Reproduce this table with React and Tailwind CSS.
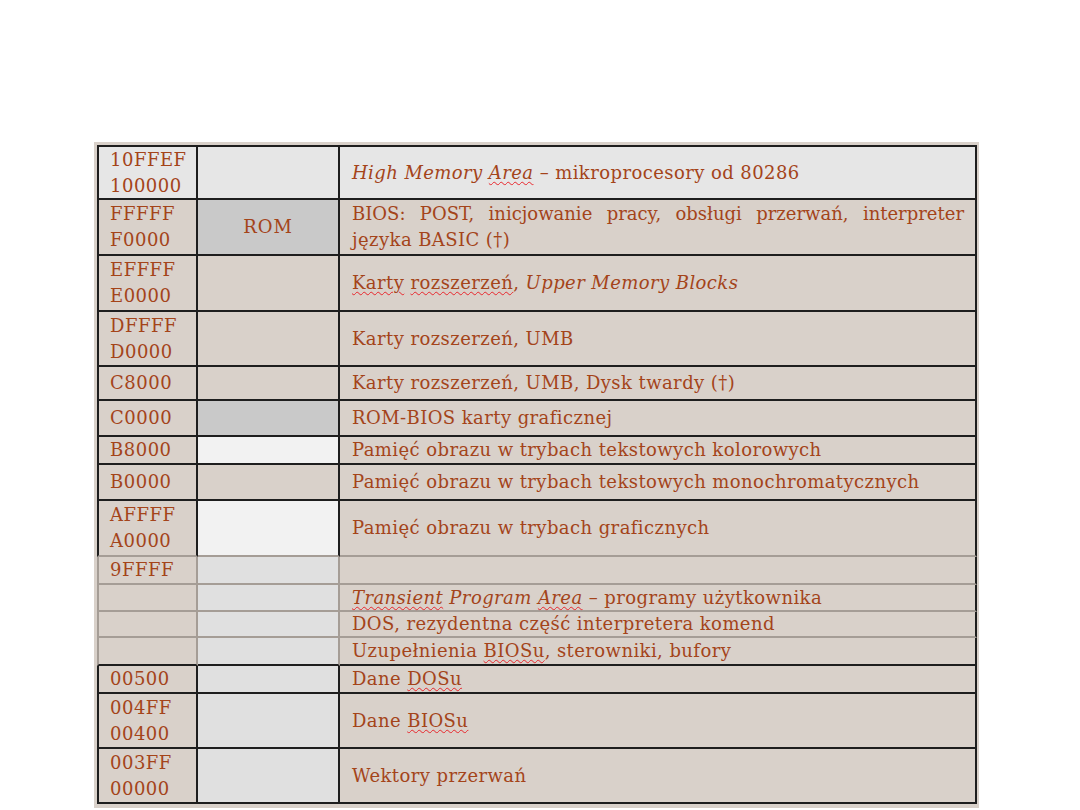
const W = ({ children }) => (
  <span className="underline decoration-wavy decoration-[#e8262c] decoration-1 underline-offset-[2px]">{children}</span>
);

const rows = [
  { h: 'h-[55px]', c1: ['10FFEF', '100000'], bg1: 'bg-[#e6e6e6]', bg2: 'bg-[#e6e6e6]', bg3: 'bg-[#e6e6e6]',
    c3: (<><i>High Memory <W>Area</W></i> – mikroprocesory od 80286</>) },
  { h: 'h-[56px]', c1: ['FFFFF', 'F0000'], bg2: 'bg-[#c9c9c9]', c2: 'ROM', bios: true },
  { h: 'h-[56px]', c1: ['EFFFF', 'E0000'],
    c3: (<><W>Karty</W> <W>rozszerzeń</W>, <i>Upper Memory Blocks</i></>) },
  { h: 'h-[55px]', c1: ['DFFFF', 'D0000'], c3: 'Karty rozszerzeń, UMB' },
  { h: 'h-[34px]', c1: ['C8000'], c3: 'Karty rozszerzeń, UMB, Dysk twardy (†)' },
  { h: 'h-[36px]', c1: ['C0000'], bg2: 'bg-[#c9c9c9]', c3: 'ROM-BIOS karty graficznej' },
  { h: 'h-[28px]', c1: ['B8000'], bg2: 'bg-[#f2f2f2]', c3: 'Pamięć obrazu w trybach tekstowych kolorowych' },
  { h: 'h-[36px]', c1: ['B0000'], c3: 'Pamięć obrazu w trybach tekstowych monochromatycznych' },
  { h: 'h-[56px]', c1: ['AFFFF', 'A0000'], bg2: 'bg-[#f2f2f2]', c3: 'Pamięć obrazu w trybach graficznych', grayBottom: true },
  { h: 'h-[28px]', c1: ['9FFFF'], bg2: 'bg-[#e0e0e0]', c3: '', gray: true, grayBottom: true },
  { h: 'h-[27px]', c1: [], bg2: 'bg-[#e0e0e0]', gray: true, grayBottom: true,
    c3: (<><i><W>Transient</W> Program <W>Area</W></i> – programy użytkownika</>) },
  { h: 'h-[26px]', c1: [], bg2: 'bg-[#e0e0e0]', gray: true, grayBottom: true,
    c3: 'DOS, rezydentna część interpretera komend' },
  { h: 'h-[28px]', c1: [], bg2: 'bg-[#e0e0e0]', gray: true,
    c3: (<>Uzupełnienia <W>BIOSu</W>, sterowniki, bufory</>) },
  { h: 'h-[28px]', c1: ['00500'], bg2: 'bg-[#e0e0e0]', c3: (<>Dane <W>DOSu</W></>) },
  { h: 'h-[55px]', c1: ['004FF', '00400'], bg2: 'bg-[#e0e0e0]', c3: (<>Dane <W>BIOSu</W></>) },
  { h: 'h-[55px]', c1: ['003FF', '00000'], bg2: 'bg-[#e0e0e0]', c3: 'Wektory przerwań' },
];

export default function App() {
  return (
    <div className="w-[1080px] h-[810px] bg-white overflow-hidden">
      <div className="ml-[94px] mt-[142px] w-[885px] h-[666px] bg-[#d9d1ca] pl-[3px] pt-[3px]"
        style={{ fontFamily: '"DejaVu Serif", serif' }}>
        <div className="w-[880px] text-[#a4441a] text-[18px] leading-[26px]">
          {rows.map((r, i) => {
            const bb = r.grayBottom ? 'border-b-[#a59d96]' : 'border-b-[#1e1e1e]';
            const vr = r.gray ? 'border-r-[#a59d96]' : 'border-r-[#1e1e1e]';
            const vl = r.gray ? 'border-l-[#a59d96]' : 'border-l-[#1e1e1e]';
            const top = i === 0 ? 'border-t-2 border-t-[#1e1e1e]' : '';
            return (
              <div key={i} className={`flex ${r.h}`}>
                <div className={`w-[101px] shrink-0 border-l-2 border-r-2 border-b-2 ${vl} ${vr} ${bb} ${top} ${r.bg1 || 'bg-[#d9d1ca]'} pl-[11px] flex flex-col justify-center`}>
                  {r.c1.map((t, j) => (<div key={j} className="tracking-[0.5px]">{t}</div>))}
                </div>
                <div className={`w-[142px] shrink-0 border-r-2 border-b-2 ${vr} ${bb} ${top} ${r.bg2 || 'bg-[#d9d1ca]'} flex items-center justify-center tracking-[1px]`}>
                  {r.c2 || ''}
                </div>
                <div className={`w-[637px] shrink-0 border-r-2 border-b-2 border-r-[#1e1e1e] ${bb} ${top} ${r.bg3 || 'bg-[#d9d1ca]'} pl-[12px] pr-[11px] flex flex-col justify-center tracking-[0.42px]`}>
                  {r.bios ? (
                    <>
                      <div className="text-justify [text-align-last:justify] tracking-normal">BIOS: POST, inicjowanie pracy, obsługi przerwań, interpreter</div>
                      <div>języka BASIC (†)</div>
                    </>
                  ) : (
                    <div className="whitespace-nowrap">{r.c3}</div>
                  )}
                </div>
              </div>
            );
          })}
        </div>
      </div>
    </div>
  );
}
